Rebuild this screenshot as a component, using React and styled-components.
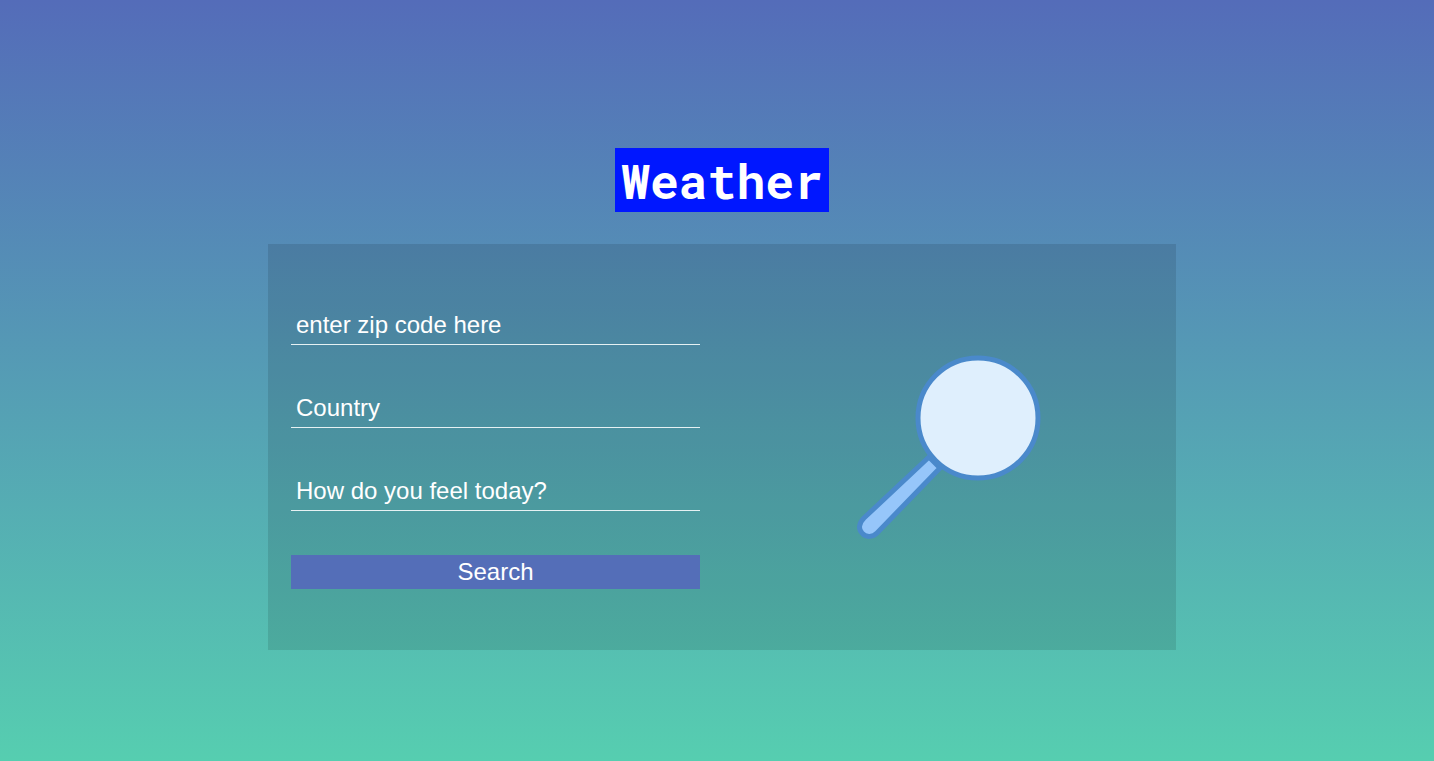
import React from "react";
import styled, { createGlobalStyle } from "styled-components";

const GlobalStyle = createGlobalStyle`
  *, *::before, *::after { box-sizing: border-box; }
  body { margin: 0; font-family: "Liberation Sans", Arial, sans-serif; }
`;

const Page = styled.main`
  min-height: 100vh;
  padding: 148px 0 64px 10px;
  display: flex;
  flex-direction: column;
  align-items: center;
  gap: 32px;
  background: linear-gradient(to bottom, #546cb9, #56ceb0);
`;

const Title = styled.h1`
  margin: 0;
  padding: 2px 6px 0;
  background: #0017ff;
  color: #fff;
  font-family: "Roboto Mono", "DejaVu Sans Mono", monospace;
  font-size: 48px;
  line-height: 62px;
  font-weight: 700;
`;

const Panel = styled.section`
  width: 64%;
  max-width: 908px;
  display: grid;
  grid-template-columns: 1fr 1fr;
  align-items: center;
  background: rgba(0, 0, 0, 0.11);
`;

const Form = styled.form`
  padding: 67px 22px 61px 23px;
  display: flex;
  flex-direction: column;
  gap: 44px;
`;

const Fields = styled.div`
  display: flex;
  flex-direction: column;
  gap: 49px;
`;

const Field = styled.input`
  width: 100%;
  height: 34px;
  padding: 0 5px 6px;
  border: 0;
  border-bottom: 1px solid #e6f1f3;
  border-radius: 0;
  outline: 0;
  background: transparent;
  color: #fff;
  font-family: inherit;
  font-size: 24px;

  &::placeholder {
    color: #fff;
    opacity: 1;
  }
`;

const SearchButton = styled.button`
  width: 100%;
  height: 34px;
  padding: 0;
  border: 0;
  background: #546eb8;
  color: #fff;
  font-family: inherit;
  font-size: 24px;
  line-height: 34px;
  cursor: pointer;
`;

const Picture = styled.div`
  display: flex;
  justify-content: center;
`;

const FIELDS = [
  { name: "zip", label: "enter zip code here" },
  { name: "country", label: "Country" },
  { name: "feeling", label: "How do you feel today?" },
];

function Magnifier() {
  return (
    <svg width="184" height="186" viewBox="0 0 184 186" aria-hidden="true">
      <path
        d="M72 103 L7 164 C2 169 1 175 5 179 C9 184 16 183 20 179 L83 114 Z"
        fill="#96c6fa"
        stroke="#4a89cb"
        strokeWidth="5"
        strokeLinejoin="round"
      />
      <circle cx="121" cy="64" r="60" fill="#dfeffd" stroke="#4a89cb" strokeWidth="5" />
    </svg>
  );
}

export default function App() {
  return (
    <>
      <GlobalStyle />
      <Page>
        <Title>Weather</Title>
        <Panel>
          <Form onSubmit={(event) => event.preventDefault()}>
            <Fields>
              {FIELDS.map(({ name, label }) => (
                <Field key={name} name={name} type="text" placeholder={label} aria-label={label} />
              ))}
            </Fields>
            <SearchButton type="submit">Search</SearchButton>
          </Form>
          <Picture>
            <Magnifier />
          </Picture>
        </Panel>
      </Page>
    </>
  );
}
